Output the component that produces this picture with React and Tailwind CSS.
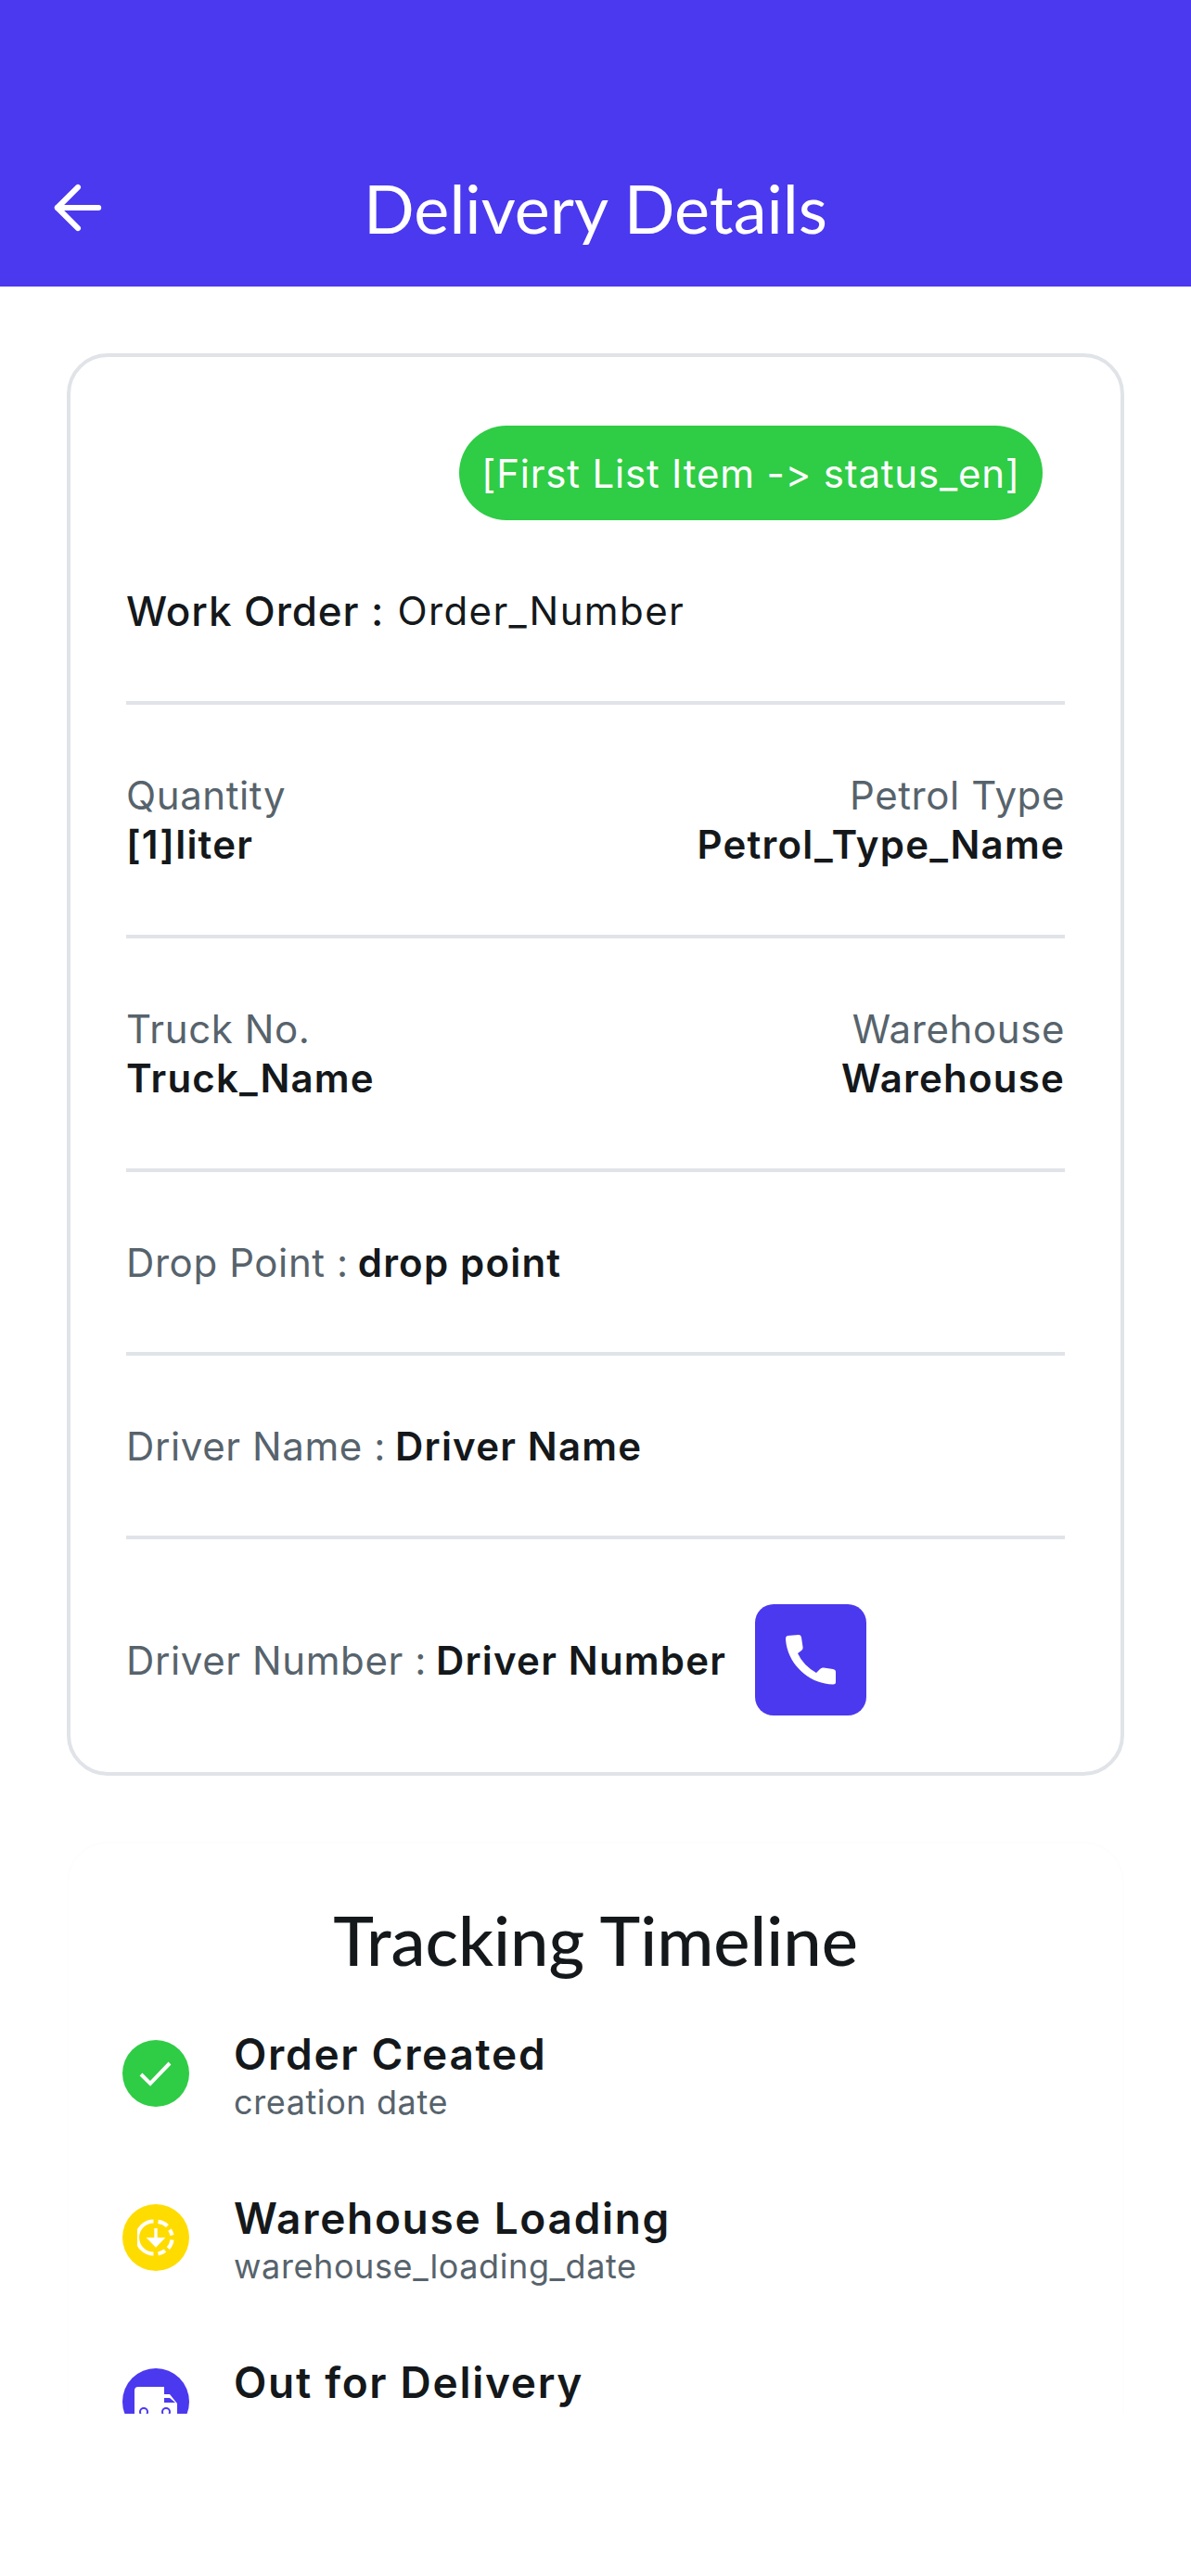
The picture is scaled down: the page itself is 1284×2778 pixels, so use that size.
import { FiArrowLeft } from "react-icons/fi"

const Divider = () => <div className="h-1 bg-[#e0e3e7]" />

const PairRow = ({ leftLabel, leftValue, rightLabel, rightValue }) => (
  <div className="flex h-[248px] items-center justify-between text-[42px] leading-[53px]">
    <div>
      <div className="tracking-[0.6px] text-[#57636c]">{leftLabel}</div>
      <div className="font-semibold tracking-[1.2px] text-[#14181b]">{leftValue}</div>
    </div>
    <div className="text-right">
      <div className="tracking-[0.6px] text-[#57636c]">{rightLabel}</div>
      <div className="font-semibold tracking-[1.2px] text-[#14181b]">{rightValue}</div>
    </div>
  </div>
)

const InlineRow = ({ label, value }) => (
  <div className="flex h-[194px] items-center gap-[10px] text-[42px]">
    <span className="tracking-[0.6px] text-[#57636c]">{label}</span>
    <span className="font-semibold tracking-[1.2px] text-[#14181b]">{value}</span>
  </div>
)

const CheckIcon = () => (
  <svg width="36" height="28" viewBox="0 0 36 28" fill="none">
    <path d="M2 15l10 10L33 3" stroke="white" strokeWidth="4" />
  </svg>
)

const LoadingIcon = () => (
  <svg width="40" height="40" viewBox="0 0 48 48" fill="none">
    <path d="M21 3A21 21 0 0 0 21 45" stroke="white" strokeWidth="5" />
    <path d="M27 3.4A21 21 0 0 1 39 9" stroke="white" strokeWidth="5" />
    <path d="M42 14A21 21 0 0 1 45 21" stroke="white" strokeWidth="5" />
    <path d="M45 27A21 21 0 0 1 40 38" stroke="white" strokeWidth="5" />
    <path d="M36 41A21 21 0 0 1 27 45" stroke="white" strokeWidth="5" />
    <path d="M22 12h4v12h10.5L24 37 11.5 24H22z" fill="white" />
  </svg>
)

const TruckIcon = () => (
  <svg width="46" height="32" viewBox="0 0 46 32" fill="none">
    <path d="M4 0h28v8h6l8 10v14H0V4a4 4 0 0 1 4-4z" fill="white" />
    <path d="M32 12h6l6 5H32z" fill="#4b39ef" />
    <circle cx="10" cy="27" r="5" fill="#4b39ef" />
    <circle cx="34" cy="27" r="5" fill="#4b39ef" />
    <circle cx="10" cy="27" r="3" fill="white" />
    <circle cx="34" cy="27" r="3" fill="white" />
  </svg>
)

const PhoneIcon = () => (
  <svg width="54" height="54" viewBox="0 0 54 54" fill="white">
    <path d="M2 1L14 0Q16.5 0 17 3L18.5 13Q19 15.5 17 17L13 20Q19 33 33 41L37 37Q38.5 35 41 35.5L51 37Q54 37.5 54 40V51Q54 53.5 51 53.5C24 53 1 30 0 4Q0 1.5 2 1Z" />
  </svg>
)

const timeline = [
  { title: "Order Created", date: "creation date", color: "bg-[#2fcc45]", icon: <CheckIcon /> },
  { title: "Warehouse Loading", date: "warehouse_loading_date", color: "bg-[#ffdc00]", icon: <LoadingIcon /> },
  { title: "Out for Delivery", date: "", color: "bg-[#4b39ef]", icon: <TruckIcon /> },
]

const App = () => {
  return (
    <div className="min-h-[2778px] bg-white font-['Inter',sans-serif] text-[#14181b]">
      <header className="grid h-[309px] grid-cols-[1fr_auto_1fr] items-center bg-[#4b39ef] pt-[150px] pb-[12px] text-white">
        <FiArrowLeft className="ml-[46px] h-[76px] w-[76px]" strokeWidth={1.9} />
        <h1 className="font-['Lato',sans-serif] text-[72px] font-normal leading-none">Delivery Details</h1>
      </header>

      <section className="mx-[72px] mt-[72px] h-[1534px] rounded-[44px] border-4 border-[#e0e3e7] px-[60px]">
        <div className="flex justify-end pt-[74px] pr-[24px]">
          <div className="flex h-[102px] w-[629px] items-center justify-center rounded-full bg-[#2fcc45] text-[42px] tracking-[0.8px] text-white [font-variant-ligatures:none]">
            [First List Item -&gt; status_en]
          </div>
        </div>
        <div className="flex h-[195px] items-center gap-[14px]">
          <span className="text-[44px] font-medium tracking-[0.9px]">Work Order :</span>
          <span className="text-[42px] tracking-[1.4px]">Order_Number</span>
        </div>
        <Divider />
        <PairRow leftLabel="Quantity" leftValue="[1]liter" rightLabel="Petrol Type" rightValue="Petrol_Type_Name" />
        <Divider />
        <PairRow leftLabel="Truck No." leftValue="Truck_Name" rightLabel="Warehouse" rightValue="Warehouse" />
        <Divider />
        <InlineRow label="Drop Point :" value="drop point" />
        <Divider />
        <InlineRow label="Driver Name :" value="Driver Name" />
        <Divider />
        <div className="flex h-[249px] items-center gap-[31px] pt-[11px] text-[42px]">
          <div className="flex gap-[10px]">
            <span className="tracking-[0.6px] text-[#57636c]">Driver Number :</span>
            <span className="font-semibold tracking-[1.2px]">Driver Number</span>
          </div>
          <button className="flex h-[120px] w-[120px] items-center justify-center rounded-[20px] bg-[#4b39ef] text-white">
            <PhoneIcon />
          </button>
        </div>
      </section>

      <section className="mx-[72px] mt-[71px] h-[617px] overflow-hidden rounded-t-[44px] border-2 border-b-0 border-[#fdfdfd] px-[58px]">
        <h2 className="pt-[59px] text-center font-['Lato',sans-serif] text-[74px] font-medium leading-[90px]">Tracking Timeline</h2>
        <div className="mt-[35px] flex flex-col gap-[49px]">
          {timeline.map((item) => (
            <div key={item.title} className="flex h-[128px] items-center gap-[48px]">
              <div className={`flex h-[72px] w-[72px] shrink-0 items-center justify-center rounded-full ${item.color}`}>
                {item.icon}
              </div>
              <div className="pt-[6px]">
                <div className="text-[46px] font-semibold leading-[56px] tracking-[1.7px]">{item.title}</div>
                <div className="min-h-[48px] text-[36px] leading-[48px] tracking-[0.6px] text-[#57636c]">{item.date}</div>
              </div>
            </div>
          ))}
        </div>
      </section>
    </div>
  )
}

export default App
